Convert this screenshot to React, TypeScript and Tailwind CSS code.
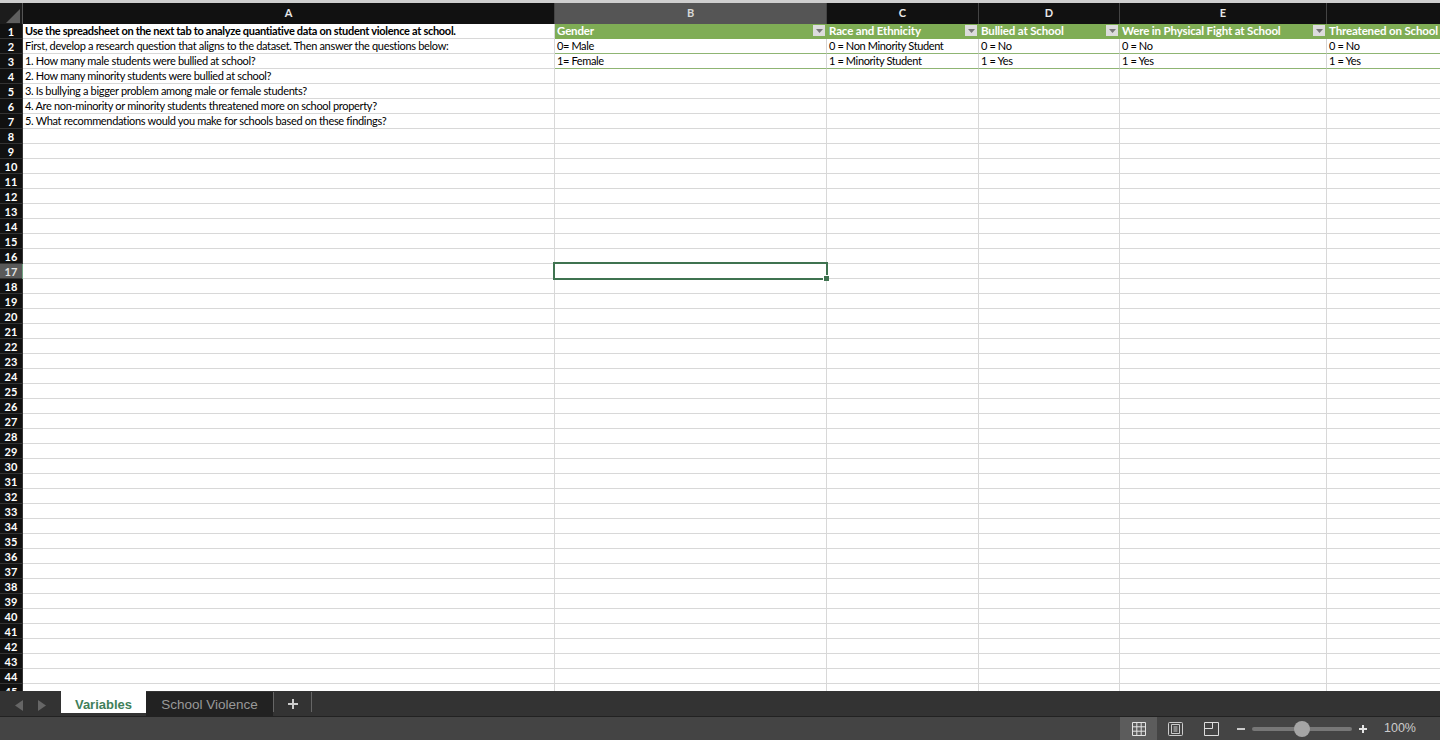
const widths = ["w-[532px]", "w-[272px]", "w-[152px]", "w-[141px]", "w-[207px]", "w-[114px]"];
const letters = ["A", "B", "C", "D", "E", ""];

const questions = [
  "Use the spreadsheet on the next tab to analyze quantiative data on student violence at school.",
  "First, develop a research question that aligns to the dataset. Then answer the questions below:",
  "1. How many male students were bullied at school?",
  "2. How many minority students were bullied at school?",
  "3. Is bullying a bigger problem among male or female students?",
  "4. Are non-minority or minority students threatened more on school property?",
  "5. What recommendations would you make for schools based on these findings?",
];

const tableHead = ["Gender", "Race and Ethnicity", "Bullied at School", "Were in Physical Fight at School", "Threatened on School Property"];
const tableRows = [
  ["0= Male", "0 = Non Minority Student", "0 = No", "0 = No", "0 = No"],
  ["1= Female", "1 = Minority Student", "1 = Yes", "1 = Yes", "1 = Yes"],
];

const rows = Array.from({ length: 45 }, (_, i) => i + 1);

function FilterButton() {
  return (
    <span className="ml-auto mr-[1px] flex h-[11px] w-[12px] shrink-0 items-center justify-center bg-[#dcdcdc]">
      <svg width="7" height="4" viewBox="0 0 7 4">
        <path d="M0 0h7L3.5 4z" fill="#777" />
      </svg>
    </span>
  );
}

function Row({ n }: { n: number }) {
  const selected = n === 17;
  return (
    <div className="flex h-[15px] shrink-0">
      <div
        className={`flex w-[22px] shrink-0 items-center justify-center border-b border-[#333] text-[11px] font-bold leading-none ${
          selected ? "bg-[#5a5a5a] text-[#e4e4e4]" : "bg-[#111] text-white"
        }`}
      >
        {n}
      </div>
      <div className={`w-[1px] shrink-0 ${selected ? "bg-[#6fa080]" : "bg-[#333]"}`} />
      {widths.map((w, col) => {
        const isFirst = col === 0;
        const head = n === 1 && col > 0;
        const data = n > 1 && n <= 3 && col > 0;
        const isSel = selected && col === 1;
        const boldTitle = isFirst && n === 1;
        return (
          <div
            key={col}
            className={`relative flex shrink-0 items-center whitespace-nowrap border-b border-r pb-[1px] pl-[2px] leading-none text-black ${w} ${
              isSel ? "" : "overflow-hidden"
            } ${
              head
                ? "border-[#7fad55] bg-[#7fad55] text-[11.5px] font-bold tracking-[-0.15px] text-white"
                : data
                  ? "border-b-[#8fb573] border-r-[#d4d4d4] text-[11px] tracking-[-0.38px]"
                  : boldTitle
                    ? "border-[#d8d8d8] text-[11px] font-bold tracking-[-0.3px]"
                    : "border-[#d8d8d8] text-[11px] tracking-[-0.32px]"
            }`}
          >
            {isFirst && questions[n - 1]}
            {head && tableHead[col - 1]}
            {head && col < 5 && <FilterButton />}
            {data && tableRows[n - 2][col - 1]}
            {isSel && (
              <span className="absolute -bottom-[2px] -left-[2px] -right-[2px] -top-[2px] z-10 border-2 border-[#3f7350]">
                <span className="absolute -bottom-[3px] -right-[3px] h-[6px] w-[6px] border border-b-0 border-r-0 border-white bg-[#3f7350]" />
              </span>
            )}
          </div>
        );
      })}
    </div>
  );
}

export default function App() {
  return (
    <div className="flex h-[740px] w-[1440px] flex-col overflow-hidden bg-white font-['Lato',sans-serif]">
      <div className="h-[3px] shrink-0 bg-[#cfcfcf]" />

      {/* column letters */}
      <div className="flex h-[21px] shrink-0 bg-[#111]">
        <div className="flex w-[23px] shrink-0 items-end justify-end border-r border-[#555] bg-[#1c1c1c] pb-[1px] pr-[2px]">
          <svg width="14" height="14" viewBox="0 0 14 14">
            <path d="M14 0v14H0z" fill="#5f5f5f" />
          </svg>
        </div>
        {widths.map((w, i) => (
          <div
            key={i}
            className={`flex shrink-0 items-center justify-center border-r border-[#444] text-[11px] font-bold ${w} ${
              i === 1 ? "bg-[#555] text-[#d8d8d8]" : "text-[#e8e8e8]"
            }`}
          >
            {letters[i]}
          </div>
        ))}
      </div>

      {/* sheet */}
      <div className="min-h-0 flex-1 overflow-hidden">
        {rows.map((n) => (
          <Row key={n} n={n} />
        ))}
      </div>

      {/* tabs */}
      <div className="flex h-[25px] shrink-0 bg-[#333] font-['Liberation_Sans',sans-serif]">
        <div className="flex w-[61px] shrink-0 items-center justify-center gap-[15px] pt-[3px]">
          <svg width="8" height="11" viewBox="0 0 8 11"><path d="M8 0v11L0 5.5z" fill="#666" /></svg>
          <svg width="8" height="11" viewBox="0 0 8 11"><path d="M0 0v11l8-5.5z" fill="#666" /></svg>
        </div>
        <div className="flex h-[22px] w-[85px] shrink-0 items-center justify-center bg-white pt-[6px] text-[13px] font-bold text-[#3f7f5a]">
          Variables
        </div>
        <div className="mt-[1px] flex h-[24px] w-[127px] shrink-0 items-center justify-center bg-[#222] pt-[2px] text-[13.5px] text-[#999]">
          School Violence
        </div>
        <div className="mt-[1px] flex h-[20px] w-[39px] shrink-0 items-center justify-center border-x border-[#666] pt-[3px]">
          <svg width="12" height="12" viewBox="0 0 12 12"><path d="M6 1v10M1 6h10" stroke="#ccc" strokeWidth="2" /></svg>
        </div>
      </div>

      {/* status bar */}
      <div className="flex h-[24px] shrink-0 items-center border-t border-[#222] bg-[#444] font-['Liberation_Sans',sans-serif]">
        <div className="ml-auto flex h-full items-center">
          <div className="flex h-full w-[37px] items-center justify-center bg-[#5c5c5c]">
            <svg width="14" height="14" viewBox="0 0 14 14" fill="none" stroke="#e4e4e4" strokeWidth="1">
              <path d="M.5.5h13v13H.5zM.5 4.8h13M.5 9.2h13M4.8.5v13M9.2.5v13" />
            </svg>
          </div>
          <div className="flex w-[36px] items-center justify-center">
            <svg width="15" height="14" viewBox="0 0 15 14" fill="none" stroke="#ccc" strokeWidth="1">
              <path d="M1.5.5h12a1 1 0 0 1 1 1v11a1 1 0 0 1-1 1h-12a1 1 0 0 1-1-1v-11a1 1 0 0 1 1-1zM3.5 2.5h8v9h-8zM5.5 5h4M5.5 7h4M5.5 9h4" />
            </svg>
          </div>
          <div className="flex w-[36px] items-center justify-center">
            <svg width="15" height="14" viewBox="0 0 15 14" fill="none" stroke="#ddd" strokeWidth="1">
              <path d="M.5.5h14v13H.5zM.5 6.5h8v-6" />
            </svg>
          </div>
          <span className="ml-[8px] h-[2px] w-[8px] bg-[#ccc]" />
          <div className="relative ml-[7px] h-[4px] w-[100px] rounded-full bg-[#777]">
            <span className="absolute left-[42px] top-[-6px] h-[16px] w-[16px] rounded-full bg-[#a5a5a5]" />
          </div>
          <svg className="ml-[7px]" width="8" height="8" viewBox="0 0 8 8"><path d="M4 0v8M0 4h8" stroke="#e4e4e4" strokeWidth="2" /></svg>
          <span className="ml-[17px] mr-[25px] w-[31px] whitespace-nowrap text-[12.5px] text-[#ccc]">100%</span>
        </div>
      </div>
    </div>
  );
}
